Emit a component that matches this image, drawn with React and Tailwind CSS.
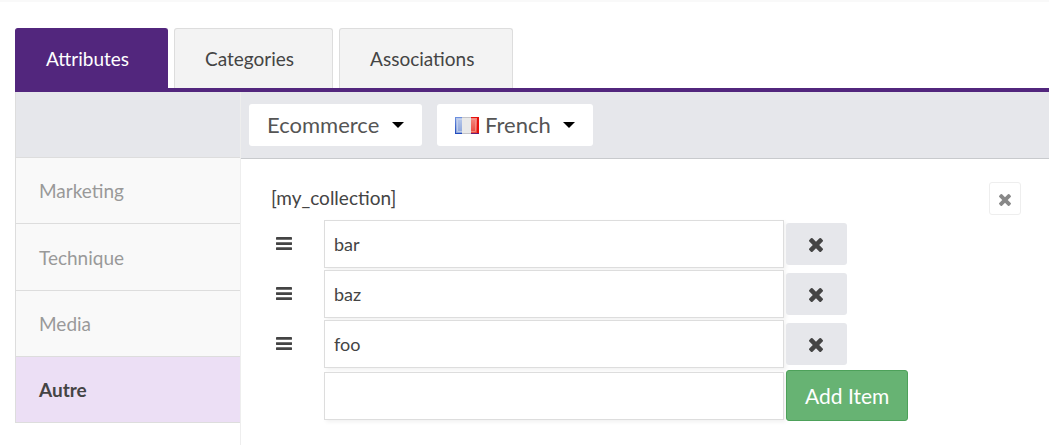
import { useState } from "react";

const TABS = ["Attributes", "Categories", "Associations"];
const GROUPS = ["Marketing", "Technique", "Media", "Autre"];

function TimesIcon({ className }) {
  return (
    <svg viewBox="302 366 1188 1188" className={className} fill="currentColor" aria-hidden="true">
      <path d="M1490 1322q0 40-28 68l-136 136q-28 28-68 28t-68-28l-294-294-294 294q-28 28-68 28t-68-28l-136-136q-28-28-28-68t28-68l294-294-294-294q-28-28-28-68t28-68l136-136q28-28 68-28t68 28l294 294 294-294q28-28 68-28t68 28l136 136q28 28 28 68t-28 68l-294 294 294 294q28 28 28 68z" />
    </svg>
  );
}

function BarsIcon() {
  return (
    <svg viewBox="0 0 16 13" className="h-[13px] w-4" fill="currentColor" aria-hidden="true">
      <rect y="0" width="16" height="2.7" rx="0.4" />
      <rect y="5.2" width="16" height="2.7" rx="0.4" />
      <rect y="10.3" width="16" height="2.7" rx="0.4" />
    </svg>
  );
}

function FrenchFlag() {
  return (
    <svg viewBox="0 0 24 17" className="h-[17px] w-6 shrink-0" aria-hidden="true">
      <defs>
        <linearGradient id="flag-blue" x1="0" y1="0" x2="0" y2="1">
          <stop offset="0" stopColor="#b9c9ea" />
          <stop offset="1" stopColor="#8ba4da" />
        </linearGradient>
        <linearGradient id="flag-blue-edge" x1="0" y1="0" x2="0" y2="1">
          <stop offset="0" stopColor="#6f92e0" />
          <stop offset="1" stopColor="#1f49bd" />
        </linearGradient>
        <linearGradient id="flag-red" x1="0" y1="0" x2="0" y2="1">
          <stop offset="0" stopColor="#f58a80" />
          <stop offset="1" stopColor="#e8463a" />
        </linearGradient>
      </defs>
      <rect width="8" height="17" fill="url(#flag-blue-edge)" />
      <rect x="1" y="1" width="7" height="15" fill="url(#flag-blue)" />
      <path d="M8 2.5H2.5v12H8" fill="none" stroke="#c5d2ee" strokeWidth="0.8" />
      <rect x="7" width="9" height="17" fill="#c4c4c8" />
      <rect x="7" y="1" width="9" height="15" fill="#e9e9e9" />
      <rect x="16" width="8" height="17" fill="#e60f0c" />
      <rect x="16" y="1" width="6" height="15" fill="url(#flag-red)" />
      <path d="M16 2.5h4.5v12H16" fill="none" stroke="#f79a92" strokeWidth="0.7" />
      <rect x="16" y="16" width="8" height="1" fill="#6a1c74" />
    </svg>
  );
}

function Picker({ label, options, icon }) {
  return (
    <label className="relative flex h-[42px] items-center gap-1.5 rounded-[3px] bg-white pl-[18px] text-[22px] text-[#555]">
      {icon}
      <select aria-label={label} className="h-full appearance-none bg-transparent pr-[42px] pb-0.5 outline-none">
        {options.map((o) => (
          <option key={o}>{o}</option>
        ))}
      </select>
      <svg viewBox="0 0 12 6" className="pointer-events-none absolute right-[18px] h-1.5 w-3" aria-hidden="true">
        <path d="M0 0h12L6 6z" fill="#000" />
      </svg>
    </label>
  );
}

const inputClass =
  "h-12 w-full max-w-[460px] min-w-0 border border-[#ddd] bg-white px-[9px] text-lg shadow-[2px_2px_4px_rgba(0,0,0,0.06)] outline-none";

export default function App() {
  const [items, setItems] = useState(["bar", "baz", "foo"]);
  const [draft, setDraft] = useState("");
  const [tab, setTab] = useState("Attributes");
  const [group, setGroup] = useState("Autre");

  const addItem = (e) => {
    e.preventDefault();
    if (draft) {
      setItems([...items, draft]);
      setDraft("");
    }
  };

  return (
    <div className="flex min-h-screen flex-col border-t-2 border-[#f9f9f9] bg-white pl-[15px] font-['Lato',sans-serif] text-[19px] text-[#444]">
      <nav className="mt-[26px] flex gap-1.5 border-b-4 border-[#52267d]" role="tablist">
        {TABS.map((t) => (
          <button
            key={t}
            type="button"
            role="tab"
            aria-selected={t === tab}
            onClick={() => setTab(t)}
            className={
              t === tab
                ? "h-[60px] rounded-t-[3px] border border-b-0 border-[#52267d] bg-[#52267d] pt-0.5 pr-[38px] pl-[30px] text-white"
                : "h-[60px] rounded-t-[3px] border border-b-0 border-[#ddd] bg-[#f3f3f3] pt-0.5 pr-[38px] pl-[30px]"
            }
          >
            {t}
          </button>
        ))}
      </nav>

      <div className="flex flex-1">
        <aside className="w-[225px] shrink-0">
          <div className="h-[66px] border-b border-l border-[#ddd] bg-[#e6e7eb]" />
          <ul className="grid min-h-[265px] auto-rows-fr border-l border-[#ddd]">
            {GROUPS.map((g) => (
              <li key={g} className="border-b border-[#ddd]">
                <a
                  href={`#${g.toLowerCase()}`}
                  onClick={() => setGroup(g)}
                  className={
                    g === group
                      ? "flex h-full items-center bg-[#ecdff5] px-[23px] pt-0.5 font-bold"
                      : "flex h-full items-center bg-[#f9f9f9] px-[23px] pt-0.5 text-[#999]"
                  }
                >
                  {g}
                </a>
              </li>
            ))}
          </ul>
        </aside>

        <main className="min-w-0 flex-1 border-l border-[#eee]">
          <div className="flex h-[67px] items-center gap-[15px] border-b border-[#c8cacd] bg-[#e6e7eb] px-2">
            <Picker label="Channel" options={["Ecommerce"]} />
            <Picker label="Locale" options={["French"]} icon={<FrenchFlag />} />
          </div>

          <form onSubmit={addItem} className="pt-[23px] pr-7 pl-[30px]">
            <div className="flex h-[38px] items-start justify-between">
              <label htmlFor="new-item" className="leading-8">
                [my_collection]
              </label>
              <button
                type="button"
                aria-label="Remove attribute"
                className="flex h-[33px] w-8 items-center justify-center rounded-[3px] border border-[#eee] pt-[3px] text-[#888]"
              >
                <TimesIcon className="h-3 w-3" />
              </button>
            </div>

            <ul>
              {items.map((item, i) => (
                <li key={i} className="flex h-[50px] items-start gap-0.5">
                  <span className="flex h-[46px] w-[51px] shrink-0 items-center pl-[5px]">
                    <BarsIcon />
                  </span>
                  <input
                    type="text"
                    aria-label={`Item ${i + 1}`}
                    value={item}
                    onChange={(e) => setItems(items.map((v, j) => (j === i ? e.target.value : v)))}
                    className={inputClass}
                  />
                  <button
                    type="button"
                    aria-label={`Remove ${item}`}
                    onClick={() => setItems(items.filter((_, j) => j !== i))}
                    className="mt-[3px] flex h-[42px] w-[61px] shrink-0 items-center justify-center rounded-[3px] bg-[#e6e7eb] pt-px pr-px"
                  >
                    <TimesIcon className="h-[14px] w-[14px]" />
                  </button>
                </li>
              ))}
            </ul>
            <div className="flex items-center gap-0.5 pl-[53px]">
              <input
                id="new-item"
                type="text"
                value={draft}
                onChange={(e) => setDraft(e.target.value)}
                className={inputClass}
              />
              <button
                type="submit"
                className="h-[51px] shrink-0 rounded-[3px] border border-[#4da15a] bg-[#67b373] px-[18px] pt-px text-[21px] text-white"
              >
                Add Item
              </button>
            </div>
          </form>
        </main>
      </div>
    </div>
  );
}
